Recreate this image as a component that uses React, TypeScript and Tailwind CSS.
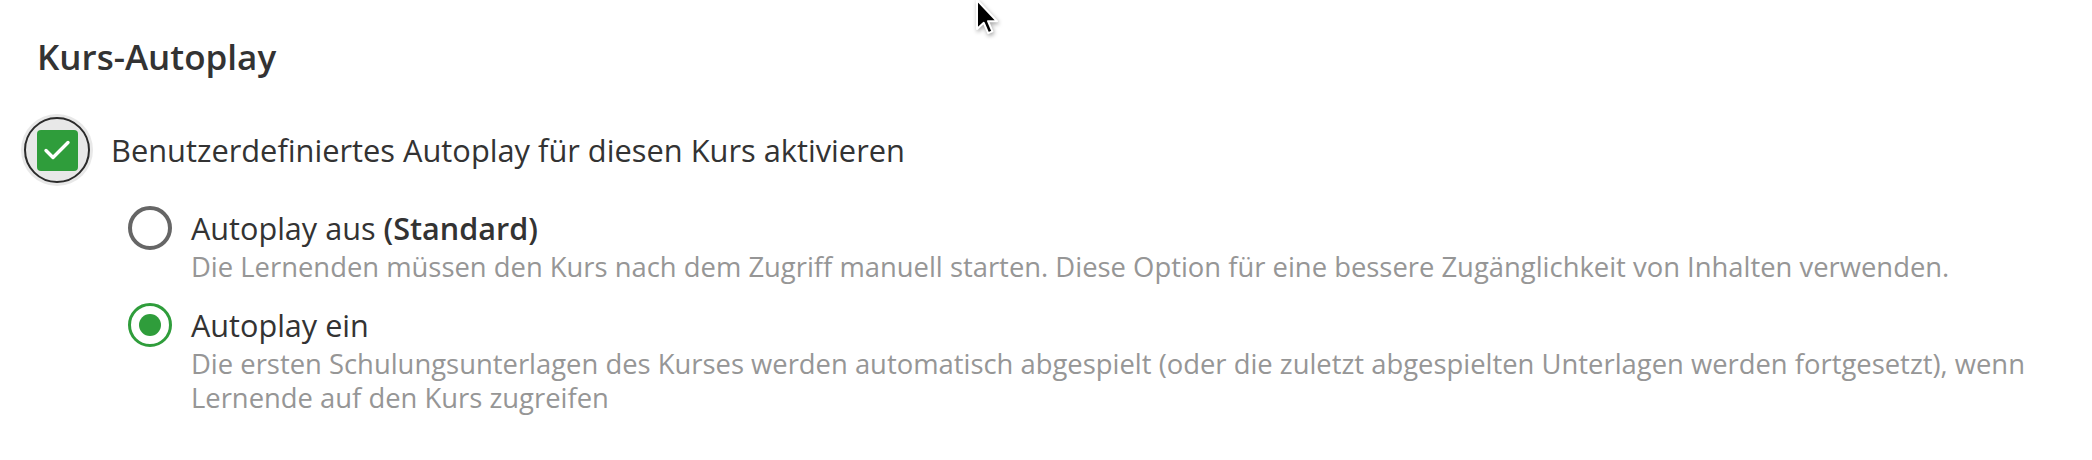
import { useState } from 'react'

type Option = {
  id: 'off' | 'on'
  label: string
  suffix?: string
  description: string
}

const options: Option[] = [
  {
    id: 'off',
    label: 'Autoplay aus',
    suffix: '(Standard)',
    description:
      'Die Lernenden müssen den Kurs nach dem Zugriff manuell starten. Diese Option für eine bessere Zugänglichkeit von Inhalten verwenden.',
  },
  {
    id: 'on',
    label: 'Autoplay ein',
    description:
      'Die ersten Schulungsunterlagen des Kurses werden automatisch abgespielt (oder die zuletzt abgespielten Unterlagen werden fortgesetzt), wenn Lernende auf den Kurs zugreifen',
  },
]

function Radio({ checked }: { checked: boolean }) {
  return checked ? (
    <span className="flex h-[44px] w-[44px] shrink-0 items-center justify-center rounded-full border-[3.5px] border-[#2f9d3b]">
      <span className="h-[22px] w-[22px] rounded-full bg-[#2f9d3b]" />
    </span>
  ) : (
    <span className="h-[44px] w-[44px] shrink-0 rounded-full border-4 border-[#666666]" />
  )
}

function Pointer() {
  return (
    <svg
      className="pointer-events-none absolute left-[973px] top-[-2px] drop-shadow-[1px_2px_2px_rgba(0,0,0,0.35)]"
      width="28"
      height="38"
      viewBox="0 0 14 19"
    >
      <path
        d="M2 1 L2 15.5 L5.4 12.4 L7.6 17.6 L9.7 16.7 L7.5 11.6 L12 11.6 Z"
        fill="#000"
        stroke="#fff"
        strokeWidth="1"
        strokeLinejoin="round"
      />
    </svg>
  )
}

export default function App() {
  const [enabled, setEnabled] = useState(true)
  const [mode, setMode] = useState<Option['id']>('on')

  return (
    <div className="relative h-[460px] w-full overflow-hidden bg-white pl-[21px] pr-[40px] pt-[33px] font-['Open_Sans',sans-serif] text-[#333333]">
      <h2 className="pl-[16px] text-[35px] font-semibold leading-[48px]">Kurs-Autoplay</h2>

      {/* Master checkbox */}
      <label className="mt-[33px] flex cursor-pointer items-center gap-[18px]">
        <span
          className="flex h-[72px] w-[72px] shrink-0 items-center justify-center rounded-full bg-[#e8e8e8]"
          onClick={() => setEnabled(e => !e)}
        >
          <span className="flex h-[66px] w-[66px] items-center justify-center rounded-full border-2 border-[#2b2b2b]">
            <span className="flex h-[41px] w-[41px] items-center justify-center rounded-[4px] bg-[#2f9d3b]">
              {enabled && (
                <svg width="28" height="22" viewBox="0 0 28 22" fill="none">
                  <path d="M3 11.5 L10 18.5 L25 3.5" stroke="#fff" strokeWidth="3.4" strokeLinecap="round" strokeLinejoin="round" />
                </svg>
              )}
            </span>
          </span>
        </span>
        <span className="text-[30.8px] leading-[44px]">Benutzerdefiniertes Autoplay für diesen Kurs aktivieren</span>
      </label>

      {/* Autoplay mode */}
      <div className="mt-[20px] flex flex-col gap-[19px] pl-[107px]">
        {options.map(o => (
          <div key={o.id} className="flex cursor-pointer items-start gap-[19px]" onClick={() => setMode(o.id)}>
            <Radio checked={mode === o.id} />
            <div className="flex flex-col">
              <span className="text-[30.6px] leading-[44px]">
                {o.label}
                {o.suffix && <span className="font-semibold"> {o.suffix}</span>}
              </span>
              <span className="text-[27.4px] leading-[34px] text-[#969696]">{o.description}</span>
            </div>
          </div>
        ))}
      </div>

      <Pointer />
    </div>
  )
}
